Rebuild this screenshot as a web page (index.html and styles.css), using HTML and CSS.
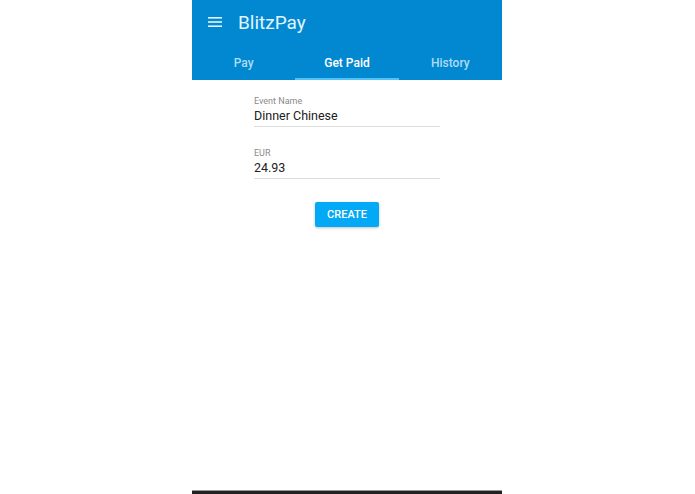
FILE: index.html
```html
<!DOCTYPE html>
<html lang="en">

<head>
    <meta charset="utf-8" />
    <title>BlitzPay</title>
    <link rel="stylesheet" href="styles.css">
</head>

<body>
    <div class="app">
        <div class="header">
            <div class="toolbar">
                <svg class="menu" width="14" height="10" viewBox="0 0 14 10">
                    <rect x="0" y="0" width="14" height="1.6" fill="#e1f5fe" />
                    <rect x="0" y="4.2" width="14" height="1.6" fill="#e1f5fe" />
                    <rect x="0" y="8.4" width="14" height="1.6" fill="#e1f5fe" />
                </svg>
                <span class="title">BlitzPay</span>
            </div>
            <div class="tabs">
                <div class="tab">Pay</div>
                <div class="tab active">Get Paid</div>
                <div class="tab">History</div>
            </div>
        </div>
        <div class="content">
            <div class="field">
                <label>Event Name</label>
                <div class="value">Dinner Chinese</div>
            </div>
            <div class="field">
                <label>EUR</label>
                <div class="value">24.93</div>
            </div>
            <button class="create">CREATE</button>
        </div>
        <div class="bottom"></div>
    </div>
</body>

</html>
```

FILE: styles.css
```css
html, body {
    margin: 0;
    padding: 0;
    background-color: white;
    font-family: Roboto, "Liberation Sans", sans-serif;
}

.app {
    width: 310px;
    height: 494px;
    margin: 0 0 0 192px;
    display: flex;
    flex-direction: column;
}

.header {
    background-color: #0288d1;
    height: 80px;
}

.toolbar {
    height: 44px;
    display: flex;
    align-items: center;
    padding-left: 16px;
}

.title {
    color: #e1f5fe;
    font-size: 19px;
    margin-left: 16px;
}

.tabs {
    display: flex;
    height: 36px;
}

.tab {
    flex: 1;
    text-align: center;
    font-size: 12px;
    font-weight: 500;
    color: #aedcf5;
    padding-top: 4px;
    line-height: 30px;
    border-bottom: 2px solid transparent;
}

.tab.active {
    color: #ffffff;
    border-bottom-color: #4fc3f7;
}

.content {
    flex: 1;
    display: flex;
    flex-direction: column;
    align-items: center;
    padding-top: 16px;
}

.field {
    width: 186px;
    border-bottom: 1px solid #dcdcdc;
    margin-bottom: 21px;
}

.field label {
    display: block;
    font-size: 9px;
    color: #8a8a8a;
    line-height: 11px;
}

.value {
    font-size: 12.5px;
    color: #212121;
    line-height: 16px;
    margin-top: 1px;
    padding-bottom: 2px;
}

.create {
    margin-top: 2px;
    width: 64px;
    height: 25px;
    border: none;
    border-radius: 2px;
    background-color: #03a9f4;
    color: white;
    font-family: Roboto, "Liberation Sans", sans-serif;
    font-size: 11px;
    font-weight: 500;
    box-shadow: 0 1px 3px rgba(0, 0, 0, 0.25);
    padding: 0;
}

.bottom {
    height: 3px;
    background-color: #222;
    border-top: 1px solid #999;
}
```
